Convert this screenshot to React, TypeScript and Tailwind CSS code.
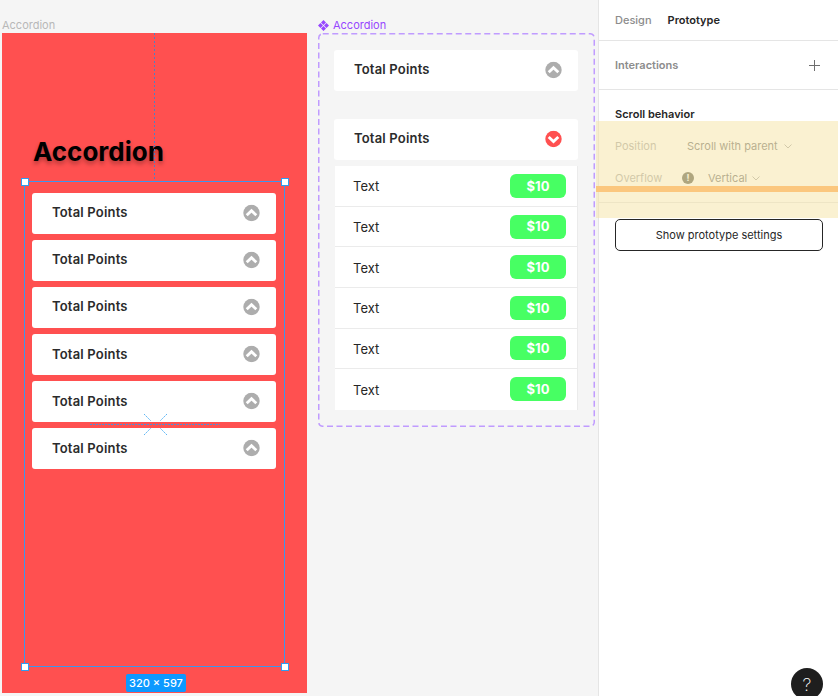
import React from "react";

const font = { fontFamily: "Inter, 'Liberation Sans', sans-serif" };

function Chevron({ color, down }: { color: string; down?: boolean }) {
  return (
    <svg width="17" height="17" viewBox="0 0 17 17" className="shrink-0 -translate-y-[0.5px]">
      <circle cx="8.5" cy="8.5" r="8.2" fill={color} />
      <path
        d={down ? "M3.7 6.4 L8.5 11 L13.3 6.4" : "M3.7 10.8 L8.5 6.2 L13.3 10.8"}
        fill="none"
        stroke="white"
        strokeWidth="2.8"
      />
    </svg>
  );
}

function Card({ color = "#adadad", down, cls = "" }: { color?: string; down?: boolean; cls?: string }) {
  return (
    <div className={`flex h-[40.6px] w-[244px] items-center justify-between rounded-[3px] bg-white pl-5 pr-4 ${cls}`}>
      <span className="pb-[1px] text-[13px] font-semibold leading-none tracking-[0.18px] text-[#2b2b2b]">Total Points</span>
      <Chevron color={color} down={down} />
    </div>
  );
}

function Row({ last }: { last?: boolean }) {
  return (
    <div className={`flex h-[40.6px] items-center justify-between pl-[18px] pr-[11px] ${last ? "" : "border-b border-[#ebebeb]"}`}>
      <span className="pt-[2px] text-[13px] leading-none text-[#262626]">Text</span>
      <span className="flex h-[24px] w-[56px] items-center justify-center rounded-[6px] bg-[#47ff63] pt-[1px] text-[13px] font-bold text-white">
        $10
      </span>
    </div>
  );
}

function Handle({ cls }: { cls: string }) {
  return <div className={`absolute h-[8px] w-[8px] border-[1.5px] border-[#2f9bf0] bg-white ${cls}`} />;
}

export default function App() {
  return (
    <div style={font} className="relative flex h-[696px] w-[838px] overflow-hidden bg-[#f5f5f5]">
      {/* canvas */}
      <div className="relative h-full w-[598px] shrink-0">
        <div className="absolute left-[2px] top-[19px] text-[11px] leading-[13px] text-[#b8b8b8]">Accordion</div>
        {/* frame */}
        <div className="absolute left-[2px] top-[33px] h-[660px] w-[305px] bg-[#ff5050]">
          <div
            className="absolute left-[31px] top-[102px] text-[26px] font-bold leading-[34px] text-black"
            style={{ textShadow: "0 3px 4px rgba(0,0,0,0.3)" }}
          >
            Accordion
          </div>
          <div className="absolute left-[30px] top-[160px] flex flex-col gap-[6.5px]">
            <Card />
            <Card />
            <Card />
            <Card />
            <Card />
            <Card />
          </div>
          {/* selection */}
          <svg width="305" height="660" viewBox="0 0 305 660" className="absolute left-0 top-0" fill="none">
            <path d="M152.5 0 V148" stroke="#4f7fc4" strokeDasharray="2 2" />
            <rect x="22.5" y="148.5" width="260" height="485" stroke="#3d96ee" />
            <path d="M88 391.5 H218" stroke="#4a90d9" strokeDasharray="2 1" />
            <path d="M142 381 L149 388 M165 381 L158 388 M142 402 L149 395 M165 402 L158 395" stroke="#5cb5f5" strokeDasharray="2 1" />
          </svg>
          <Handle cls="left-[19px] top-[145px]" />
          <Handle cls="left-[279px] top-[145px]" />
          <Handle cls="left-[19px] top-[630px]" />
          <Handle cls="left-[279px] top-[630px]" />
          <div className="absolute left-[124px] top-[641px] flex h-[18px] w-[60px] items-center justify-center rounded-[2px] bg-[#0d99ff] text-[11px] font-medium text-white">
            320 × 597
          </div>
        </div>
        {/* component */}
        <div className="absolute left-[318px] top-[18px] flex items-center gap-[4px] text-[11px] leading-[14px] text-[#9747ff]">
          <svg width="11" height="11" viewBox="0 0 11 11">
            <path d="M5.5 0 L8 2.5 L5.5 5 L3 2.5Z M5.5 6 L8 8.5 L5.5 11 L3 8.5Z M2.5 3 L5 5.5 L2.5 8 L0 5.5Z M8.5 3 L11 5.5 L8.5 8 L6 5.5Z" fill="#9747ff" />
          </svg>
          Accordion
        </div>
        <div className="absolute left-[318px] top-[33px] h-[394px] w-[277px] pl-[16px] pt-[17px]">
          <svg width="277" height="394" viewBox="0 0 277 394" className="absolute left-0 top-0" fill="none">
            <rect x="0.75" y="0.75" width="275.5" height="392.5" rx="4" stroke="#c09bff" strokeWidth="1.5" strokeDasharray="6 3.5" />
          </svg>
          <Card />
          <Card color="#ff5050" down cls="mt-[28.4px]" />
          <div className="ml-[1px] mt-[6.6px] w-[243px] border-r border-[#ebebeb] bg-white">
            <Row />
            <Row />
            <Row />
            <Row />
            <Row />
            <Row last />
          </div>
        </div>
      </div>

      {/* right panel */}
      <div className="relative h-full flex-1 border-l border-[#e5e5e5] bg-white">
        <div className="flex h-[41px] items-center gap-[16px] border-b border-[#e5e5e5] pl-[16px] text-[11px] font-medium">
          <span className="text-[#8c8c8c]">Design</span>
          <span className="font-semibold text-[#262626]">Prototype</span>
        </div>
        <div className="flex h-[49px] items-center justify-between border-b border-[#e5e5e5] pl-[16px] pr-[18px]">
          <span className="text-[11px] font-semibold text-[#8c8c8c]">Interactions</span>
          <svg width="11" height="11" viewBox="0 0 11 11">
            <path d="M5.5 0 V11 M0 5.5 H11" stroke="#6e6e6e" strokeWidth="1" />
          </svg>
        </div>
        <div className="h-[113px] border-b border-[#e5e5e5] pl-[16px] pt-[17px]">
          <div className="text-[11px] font-semibold leading-[14px] text-[#262626]">Scroll behavior</div>
          <div className="mt-[18px] flex h-[14px] items-center text-[11px] text-[#6e6e6e]">
            <span className="w-[72px] text-[#a6a6a6]">Position</span>
            <span>Scroll with parent</span>
            <svg width="8" height="5" viewBox="0 0 8 5" className="ml-[6px]">
              <path d="M0.5 0.5 L4 4 L7.5 0.5" fill="none" stroke="#a6a6a6" />
            </svg>
          </div>
          <div className="mt-[18px] flex h-[14px] items-center text-[11px] text-[#6e6e6e]">
            <span className="w-[67px] text-[#a6a6a6]">Overflow</span>
            <span className="flex h-[12px] w-[12px] items-center justify-center rounded-full bg-[#5a5a4a] text-[9px] font-bold text-[#ffffff]">!</span>
            <span className="ml-[14px]">Vertical</span>
            <svg width="8" height="5" viewBox="0 0 8 5" className="ml-[5px]">
              <path d="M0.5 0.5 L4 4 L7.5 0.5" fill="none" stroke="#a6a6a6" />
            </svg>
          </div>
        </div>
        <button className="ml-[16px] mt-[16px] flex h-[32px] w-[208px] items-center justify-center rounded-[5px] border border-[#262626] bg-white text-[11px] text-[#262626]">
          Show prototype settings
        </button>
        <div className="absolute bottom-[-4px] right-[15px] flex h-[32px] w-[32px] items-center justify-center rounded-full bg-[#1e1e1e] text-[18px] font-extralight text-white">
          ?
        </div>
      </div>

      {/* highlight over panel */}
      <div className="absolute left-[596px] top-[121px] h-[97px] w-[242px] bg-[#f5e6ab]/55" />
      <div className="absolute left-[596px] top-[186px] h-[6px] w-[242px] bg-[#fbc77e]" />
    </div>
  );
}
